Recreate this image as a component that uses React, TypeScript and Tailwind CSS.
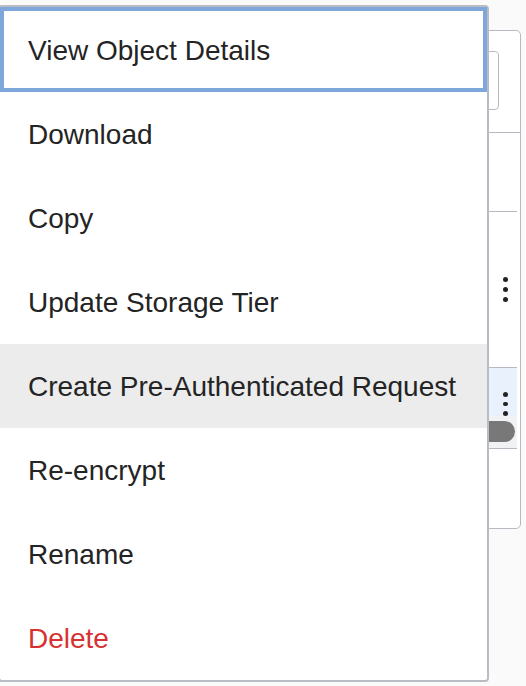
import React from "react";

const Dots = () => (
  <div className="flex flex-col items-center gap-[5px]">
    <span className="block w-[5px] h-[5px] rounded-full bg-[#222]" />
    <span className="block w-[5px] h-[5px] rounded-full bg-[#222]" />
    <span className="block w-[5px] h-[5px] rounded-full bg-[#222]" />
  </div>
);

const items = [
  "Download",
  "Copy",
  "Update Storage Tier",
  "Create Pre-Authenticated Request",
  "Re-encrypt",
  "Rename",
];

export default function App() {
  return (
    <div
      className="relative w-[526px] h-[686px] overflow-hidden bg-[#fafafa] pt-[30px] pl-[20px] pr-[5px]"
      style={{ fontFamily: '"Liberation Sans", Arial, Helvetica, sans-serif' }}
    >
      {/* Background card */}
      <div className="h-[499px] border-[1.5px] border-[#b7bbc1] rounded-[5px] bg-white flex flex-col">
        <div className="pt-[20px] pl-[20px] pr-[21px]">
          <div className="h-[59px] border-[1.5px] border-[#b7bbc1] rounded-[4px] bg-white" />
        </div>
        <div className="mt-[22px] border-t-[1.5px] border-[#b7bbc1] h-[79px]" />
        <div className="mr-[3px] flex flex-col">
          <div className="h-[156px] border-t-[1.5px] border-[#b7bbc1] flex items-center justify-end pr-[9px]">
            <Dots />
          </div>
          <div className="h-[49px] border-t-[1.5px] border-[#b7bbc1] bg-[#e9f2fc] overflow-hidden flex justify-end pr-[9px] pt-[24px]">
            <Dots />
          </div>
          <div className="h-[33px] bg-[#f1f2f4] border-b-[1.5px] border-[#b7bbc1] pt-[5px] pr-[2px]">
            <div className="h-[21px] rounded-full bg-[#787878]" />
          </div>
        </div>
      </div>

      {/* Dropdown menu */}
      <div className="absolute left-[-2px] top-[5px] w-[491px] bg-white border-2 border-[#b9bdc3] rounded-[4px] flex flex-col">
        <div className="h-[85px] border-4 border-[#7ea8dc] flex items-center pl-[24px] pt-[2px] text-[28px] text-[#242424]">
          View Object Details
        </div>
        {items.map((t) => (
          <div
            key={t}
            className={
              t === "Create Pre-Authenticated Request"
                ? "h-[84px] flex items-center pl-[28px] pt-[2px] text-[28px] text-[#242424] bg-[#ececec]"
                : "h-[84px] flex items-center pl-[28px] pt-[2px] text-[28px] text-[#242424]"
            }
          >
            {t}
          </div>
        ))}
        <div className="h-[84px] flex items-center pl-[28px] pt-[2px] text-[28px] text-[#d63232]">
          Delete
        </div>
      </div>
    </div>
  );
}
